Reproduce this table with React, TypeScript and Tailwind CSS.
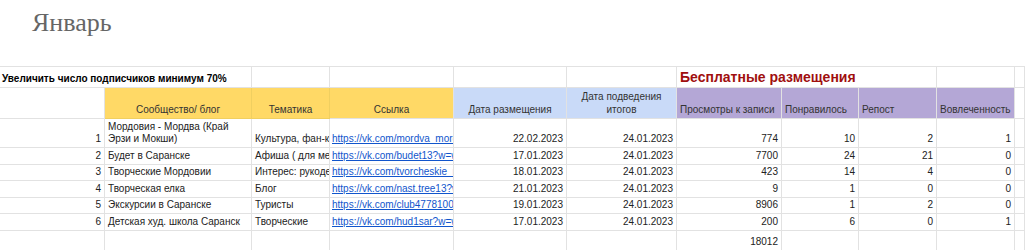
import type { ReactNode } from 'react';

type Row = {
  n: number;
  name: ReactNode;
  topic: string;
  url: string;
  posted: string;
  result: string;
  views: number;
  likes: number;
  reposts: number;
  engagement: number;
  tall?: boolean;
};

const ROWS: Row[] = [
  {
    n: 1,
    name: (
      <>
        Мордовия - Мордва (Край
        <br />
        Эрзи и Мокши)
      </>
    ),
    topic: 'Культура, фан-клуб',
    url: 'https://vk.com/mordva_mordovia',
    posted: '22.02.2023',
    result: '24.01.2023',
    views: 774,
    likes: 10,
    reposts: 2,
    engagement: 1,
    tall: true,
  },
  { n: 2, name: 'Будет в Саранске', topic: 'Афиша ( для местных )', url: 'https://vk.com/budet13?w=wall', posted: '17.01.2023', result: '24.01.2023', views: 7700, likes: 24, reposts: 21, engagement: 0 },
  { n: 3, name: 'Творческие Мордовии', topic: 'Интерес: рукоделие', url: 'https://vk.com/tvorcheskie_mordovii', posted: '18.01.2023', result: '24.01.2023', views: 423, likes: 14, reposts: 4, engagement: 0 },
  { n: 4, name: 'Творческая елка', topic: 'Блог', url: 'https://vk.com/nast.tree13?w=wall', posted: '21.01.2023', result: '24.01.2023', views: 9, likes: 1, reposts: 0, engagement: 0 },
  { n: 5, name: 'Экскурсии в Саранске', topic: 'Туристы', url: 'https://vk.com/club47781000', posted: '19.01.2023', result: '24.01.2023', views: 8906, likes: 1, reposts: 2, engagement: 0 },
  { n: 6, name: 'Детская худ. школа Саранск', topic: 'Творческие', url: 'https://vk.com/hud1sar?w=wall', posted: '17.01.2023', result: '24.01.2023', views: 200, likes: 6, reposts: 0, engagement: 1 },
];

const HEIGHTS = ['h-[29px]', 'h-[17px]', 'h-[16px]', 'h-[17px]', 'h-[16px]', 'h-[17px]'];

function Cell({ className = '', children }: { className?: string; children?: ReactNode }) {
  return (
    <div
      className={`flex items-end overflow-hidden whitespace-nowrap border-r border-b border-[#e2e2e2] pb-[2px] leading-[12px] ${className}`}
    >
      {children}
    </div>
  );
}

export default function App() {
  return (
    <div className="w-[1025px] h-[250px] overflow-hidden bg-white font-['Liberation_Sans',Arial,sans-serif] text-[10px] text-[#222]">
      <div className="pl-[32px] pt-[8px] h-[66px]">
        <h1 className="font-['Liberation_Serif','Times_New_Roman',serif] text-[26px] leading-[30px] text-[#666]">
          Январь
        </h1>
      </div>

      <div className="grid grid-cols-[105px_147px_78px_124px_113px_110px_105px_77px_78px_78px_10px] border-t border-[#e2e2e2]">
        {/* title row */}
        <Cell className="col-span-2 h-[21px] pl-[2px] font-bold text-black">
          Увеличить число подписчиков минимум 70%
        </Cell>
        <Cell />
        <Cell />
        <Cell />
        <Cell />
        <Cell className="col-span-3 pl-[3px] pb-[1px] text-[14px] leading-[16px] font-bold text-[#a00f0f]">
          Бесплатные размещения
        </Cell>
        <Cell />
        <Cell />

        {/* header row */}
        <Cell className="h-[31px]" />
        <Cell className="justify-center bg-[#ffd966] border-[#f0cf60] text-[#333]">Сообщество/ блог</Cell>
        <Cell className="justify-center bg-[#ffd966] border-[#f0cf60] text-[#333]">Тематика</Cell>
        <Cell className="justify-center bg-[#ffd966] border-[#c2cfe8] text-[#333]">Ссылка</Cell>
        <Cell className="justify-center bg-[#c9daf8] border-[#bccde9] text-[#333]">Дата размещения</Cell>
        <Cell className="justify-center bg-[#c9daf8] border-[#a99bcc] text-center whitespace-normal leading-[13px] text-[#333]">
          Дата подведения
          <br />
          итогов
        </Cell>
        <Cell className="pl-[3px] bg-[#b4a7d6] border-[#a99bcc] text-[#333]">Просмотры к записи</Cell>
        <Cell className="pl-[3px] bg-[#b4a7d6] border-[#a99bcc] text-[#333]">Понравилось</Cell>
        <Cell className="pl-[3px] bg-[#b4a7d6] border-[#a99bcc] text-[#333]">Репост</Cell>
        <Cell className="pl-[3px] bg-[#b4a7d6] border-[#a99bcc] text-[#333]">Вовлеченность</Cell>
        <Cell />

        {ROWS.map((r, i) => (
          <div key={r.n} className="contents">
            <Cell className={`${HEIGHTS[i]} justify-end pr-[3px]`}>{r.n}</Cell>
            <Cell className="pl-[3px]">{r.name}</Cell>
            <Cell className="pl-[3px]">{r.topic}</Cell>
            <Cell className="pl-[2px]">
              <span className="text-[#1155cc] underline">{r.url}</span>
            </Cell>
            <Cell className="justify-end pr-[3px]">{r.posted}</Cell>
            <Cell className="justify-end pr-[3px]">{r.result}</Cell>
            <Cell className="justify-end pr-[3px]">{r.views}</Cell>
            <Cell className="justify-end pr-[3px]">{r.likes}</Cell>
            <Cell className="justify-end pr-[3px]">{r.reposts}</Cell>
            <Cell className="justify-end pr-[3px]">{r.engagement}</Cell>
            <Cell />
          </div>
        ))}

        {/* totals */}
        <Cell className="h-[20px] pb-0" />
        <Cell className="pb-0" />
        <Cell className="pb-0" />
        <Cell className="pb-0" />
        <Cell className="pb-0" />
        <Cell className="pb-0" />
        <Cell className="justify-end pr-[3px] pb-0">18012</Cell>
        <Cell className="pb-0" />
        <Cell className="pb-0" />
        <Cell className="pb-0" />
        <Cell className="pb-0" />
      </div>
    </div>
  );
}
